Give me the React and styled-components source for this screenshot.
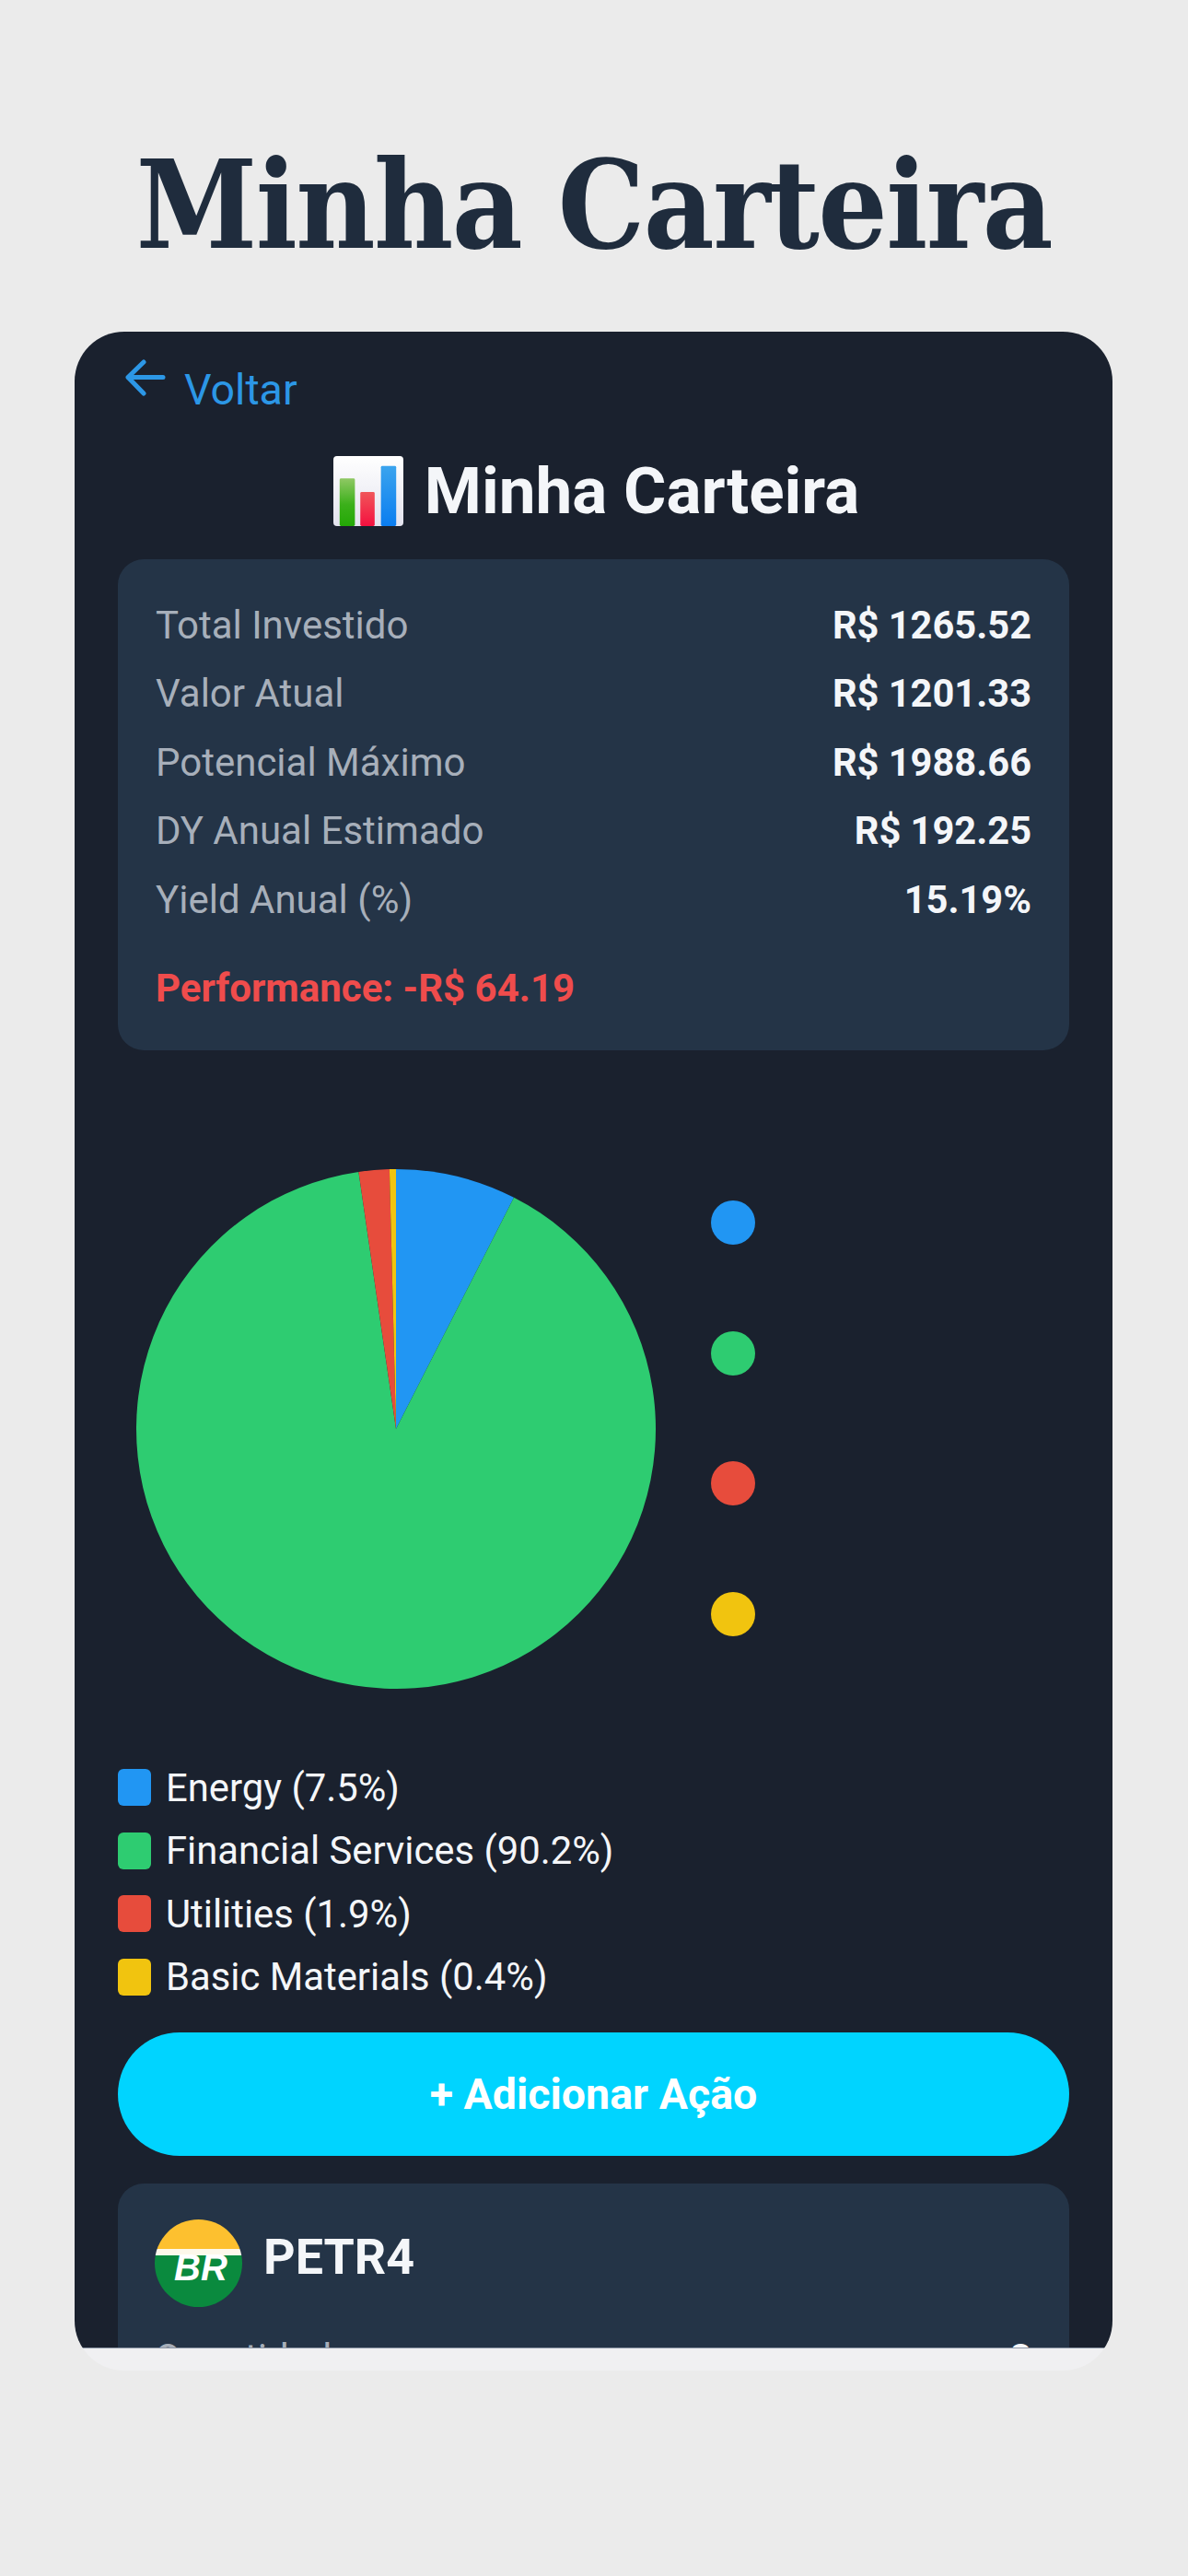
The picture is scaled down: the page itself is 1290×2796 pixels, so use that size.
import React from 'react';
import styled, { createGlobalStyle } from 'styled-components';

const GlobalStyle = createGlobalStyle`
  html, body {
    margin: 0;
    padding: 0;
    background: #ebebeb;
  }
  * {
    box-sizing: border-box;
  }
`;

const Page = styled.div`
  width: 1290px;
  height: 2796px;
  overflow: hidden;
  background: #ebebeb;
  padding-top: 139px;
  font-family: Roboto, 'Liberation Sans', sans-serif;
`;

const Headline = styled.h1`
  margin: 0;
  height: 221px;
  line-height: 168px;
  text-align: center;
  font-family: 'DejaVu Serif Condensed', 'DejaVu Serif', serif;
  font-weight: 700;
  font-size: 132px;
  letter-spacing: -1.6px;
  color: #1f2c3d;
`;

const Phone = styled.div`
  width: 1127px;
  height: 2213px;
  margin-left: 81px;
  display: flex;
  flex-direction: column;
  border-radius: 54px;
  overflow: hidden;
`;

const Screen = styled.div`
  flex: 1;
  min-height: 0;
  overflow: hidden;
  padding: 0 47px;
  background: #1a212e;
`;

const HomeBar = styled.div`
  height: 25px;
  flex: none;
  background: #f0f0f2;
  border-top: 1px solid #8d97a6;
`;

const BackRow = styled.div`
  height: 100px;
  display: flex;
  align-items: flex-start;
  gap: 20px;
  padding: 30px 0 0 8px;
  color: #2c97e6;
  font-size: 46.5px;
  line-height: 54px;
`;

const BackLabel = styled.span`
  margin-top: 6px;
`;

const ScreenTitle = styled.div`
  height: 147px;
  display: flex;
  justify-content: center;
  gap: 23px;
  padding: 38px 0 0 6px;
  color: #f4f6f9;
  font-size: 71px;
  line-height: 70px;
  font-weight: 700;
`;

const SummaryCard = styled.section`
  height: 533px;
  padding: 34px 41px 0 41px;
  border-radius: 28px;
  background: #243447;
`;

const SummaryRow = styled.div`
  height: 74.5px;
  display: flex;
  justify-content: space-between;
  align-items: center;
  font-size: 42px;
`;

const RowLabel = styled.span`
  color: #a7afba;
`;

const RowValue = styled.span`
  color: #f4f6f9;
  font-size: 41.6px;
  font-weight: 700;
`;

const Performance = styled.div`
  margin-top: 34px;
  line-height: 50px;
  font-size: 42px;
  font-weight: 700;
  color: #ef4c4c;
`;

const ChartRow = styled.div`
  display: flex;
  margin-top: 129px;
  padding-left: 20px;
`;

const ChartDots = styled.div`
  display: flex;
  flex-direction: column;
  gap: 93.7px;
  margin-left: 60px;
  padding-top: 34px;
`;

const Dot = styled.span`
  width: 48px;
  height: 48px;
  border-radius: 50%;
  background: ${(p) => p.$color};
`;

const Legend = styled.div`
  margin-top: 73px;
`;

const LegendRow = styled.div`
  height: 68.5px;
  display: flex;
  align-items: center;
  gap: 16px;
  color: #f4f6f9;
  font-size: 41.8px;
`;

const Swatch = styled.span`
  width: 36px;
  height: 40px;
  border-radius: 6px;
  background: ${(p) => p.$color};
`;

const AddButton = styled.button`
  display: block;
  width: 100%;
  height: 134px;
  margin-top: 26px;
  border: 0;
  border-radius: 67px;
  background: #00d4ff;
  color: #fff;
  font-family: inherit;
  font-size: 46.5px;
  font-weight: 700;
`;

const StockCard = styled.section`
  height: 400px;
  margin-top: 30px;
  padding: 39px 41px 0 40px;
  border-radius: 28px;
  background: #243447;
`;

const StockHead = styled.div`
  display: flex;
  align-items: center;
  gap: 23px;
  height: 95px;
  margin-bottom: 18px;
`;

const Ticker = styled.span`
  margin-top: -14px;
  color: #f4f6f9;
  font-size: 53.8px;
  font-weight: 700;
`;

const sectors = [
  { name: 'Energy', pct: 7.5, color: '#2196f3' },
  { name: 'Financial Services', pct: 90.2, color: '#2ecc71' },
  { name: 'Utilities', pct: 1.9, color: '#e74c3c' },
  { name: 'Basic Materials', pct: 0.4, color: '#f1c40f' },
];

const summary = [
  ['Total Investido', 'R$ 1265.52'],
  ['Valor Atual', 'R$ 1201.33'],
  ['Potencial Máximo', 'R$ 1988.66'],
  ['DY Anual Estimado', 'R$ 192.25'],
  ['Yield Anual (%)', '15.19%'],
];

const BackArrow = () => (
  <svg width="44" height="40" viewBox="0 0 44 40" fill="none" stroke="#2c97e6" strokeWidth="5" strokeLinecap="round" strokeLinejoin="round">
    <path d="M3 19.500H41M20 3 3 19.500 20 37" />
  </svg>
);

const BarChartIcon = () => (
  <svg width="76" height="76" viewBox="0 0 78 78" style={{ marginTop: -3 }}>
    <defs>
      <linearGradient id="paper" x1="0" y1="0" x2="0" y2="1">
        <stop offset="0" stopColor="#ffffff" />
        <stop offset="1" stopColor="#e3e3ee" />
      </linearGradient>
      <linearGradient id="green" x1="0" y1="0" x2="0" y2="1">
        <stop offset="0" stopColor="#8fc864" />
        <stop offset="0.55" stopColor="#3bb01a" />
        <stop offset="1" stopColor="#23a806" />
      </linearGradient>
      <linearGradient id="red" x1="0" y1="0" x2="0" y2="1">
        <stop offset="0" stopColor="#f0565a" />
        <stop offset="1" stopColor="#f5103f" />
      </linearGradient>
      <linearGradient id="blue" x1="0" y1="0" x2="0" y2="1">
        <stop offset="0" stopColor="#3ba4ee" />
        <stop offset="1" stopColor="#0a7df0" />
      </linearGradient>
    </defs>
    <rect width="78" height="78" rx="4" fill="url(#paper)" />
    <rect x="7" y="25" width="17" height="53" rx="1.500" fill="url(#green)" />
    <rect x="30" y="40" width="16" height="38" rx="1.500" fill="url(#red)" />
    <rect x="53" y="11" width="17" height="67" rx="1.500" fill="url(#blue)" />
  </svg>
);

const PetrobrasLogo = () => (
  <svg width="95" height="95" viewBox="0 0 95 95">
    <defs>
      <clipPath id="disc">
        <circle cx="47.500" cy="47.500" r="47.500" />
      </clipPath>
    </defs>
    <g clipPath="url(#disc)">
      <rect width="95" height="32" fill="#fdc02f" />
      <rect y="32" width="95" height="7" fill="#fdf8ea" />
      <rect y="39" width="95" height="56" fill="#0a8a3e" />
    </g>
    <text x="50" y="66" textAnchor="middle" fill="#fff" fontFamily="'Liberation Sans', sans-serif" fontWeight="700" fontStyle="italic" fontSize="40">
      BR
    </text>
  </svg>
);

// slices start at twelve o'clock and go clockwise, same order as the legend
const PieChart = ({ data, size }) => {
  const r = size / 2;
  let start = 0;
  return (
    <svg width={size} height={size} viewBox={`0 0 ${size} ${size}`}>
      {data.map((s) => {
        const end = start + (s.pct / 100) * Math.PI * 2;
        const x0 = r + r * Math.sin(start);
        const y0 = r - r * Math.cos(start);
        const x1 = r + r * Math.sin(end);
        const y1 = r - r * Math.cos(end);
        const large = end - start > Math.PI ? 1 : 0;
        start = end;
        return <path key={s.name} d={`M${r} ${r}L${x0} ${y0}A${r} ${r} 0 ${large} 1 ${x1} ${y1}Z`} fill={s.color} />;
      })}
    </svg>
  );
};

const App = () => (
  <Page>
    <GlobalStyle />
    <Headline>Minha Carteira</Headline>
    <Phone>
      <Screen>
        <BackRow>
          <BackArrow />
          <BackLabel>Voltar</BackLabel>
        </BackRow>
        <ScreenTitle>
          <BarChartIcon />
          <span>Minha Carteira</span>
        </ScreenTitle>
        <SummaryCard>
          {summary.map(([label, value]) => (
            <SummaryRow key={label}>
              <RowLabel>{label}</RowLabel>
              <RowValue>{value}</RowValue>
            </SummaryRow>
          ))}
          <Performance>Performance: -R$ 64.19</Performance>
        </SummaryCard>
        <ChartRow>
          <PieChart data={sectors} size={564} />
          <ChartDots>
            {sectors.map((s) => (
              <Dot key={s.name} $color={s.color} />
            ))}
          </ChartDots>
        </ChartRow>
        <Legend>
          {sectors.map((s) => (
            <LegendRow key={s.name}>
              <Swatch $color={s.color} />
              {s.name} ({s.pct}%)
            </LegendRow>
          ))}
        </Legend>
        <AddButton>+ Adicionar Ação</AddButton>
        <StockCard>
          <StockHead>
            <PetrobrasLogo />
            <Ticker>PETR4</Ticker>
          </StockHead>
          <SummaryRow>
            <RowLabel>Quantidade</RowLabel>
            <RowValue>8</RowValue>
          </SummaryRow>
        </StockCard>
      </Screen>
      <HomeBar />
    </Phone>
  </Page>
);

export default App;
